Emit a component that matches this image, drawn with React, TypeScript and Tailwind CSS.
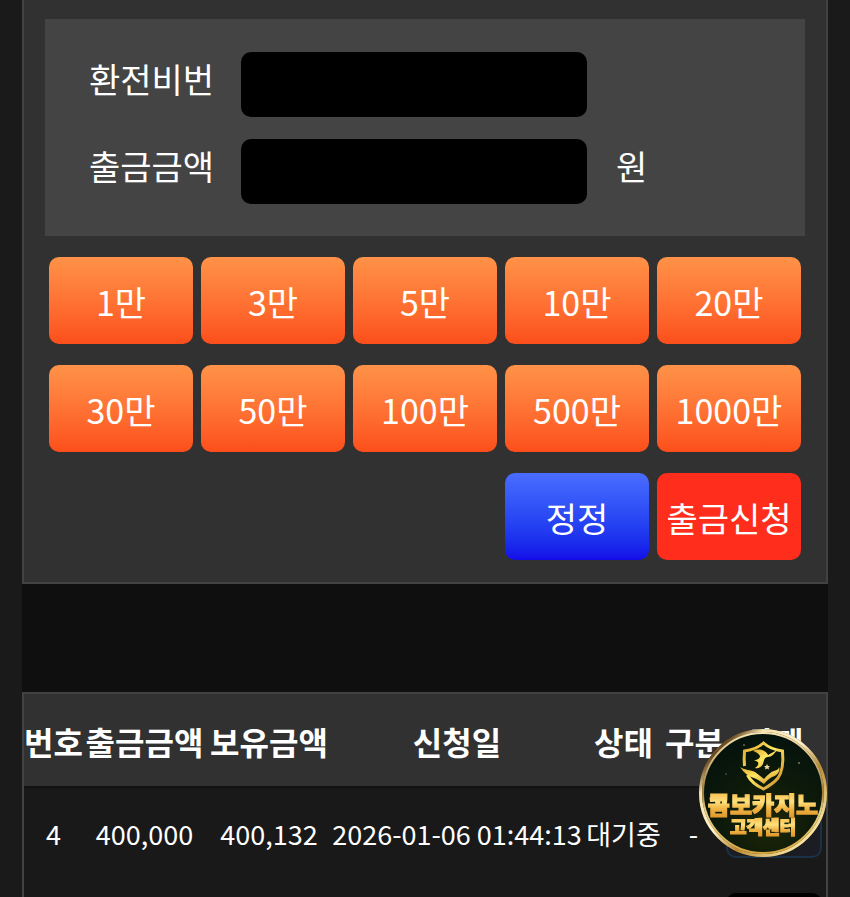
import React, { useState } from 'react';

const AMOUNTS = [
  { label: '1만', value: 10000 },
  { label: '3만', value: 30000 },
  { label: '5만', value: 50000 },
  { label: '10만', value: 100000 },
  { label: '20만', value: 200000 },
  { label: '30만', value: 300000 },
  { label: '50만', value: 500000 },
  { label: '100만', value: 1000000 },
  { label: '500만', value: 5000000 },
  { label: '1000만', value: 10000000 },
];

const COLUMNS = [
  { label: '번호', width: 'w-[59px]' },
  { label: '출금금액', width: 'w-[123px]' },
  { label: '보유금액', width: 'w-[126px]' },
  { label: '신청일', width: 'w-[250px]' },
  { label: '상태', width: 'w-[83px]' },
  { label: '구분', width: 'w-[57px]' },
  { label: '삭제', width: 'w-[104px]' },
];

const SupportBadge: React.FC = () => (
  <svg viewBox="0 0 130 130" className="w-[130px] h-[130px]" role="img" aria-label="고객센터">
    <defs>
      <linearGradient id="ring" x1="0" y1="0" x2="1" y2="1">
        <stop offset="0" stopColor="#e9d9a8" />
        <stop offset="0.15" stopColor="#6b4a22" />
        <stop offset="0.25" stopColor="#f3e3ae" />
        <stop offset="0.45" stopColor="#fff3cf" />
        <stop offset="0.62" stopColor="#b98a34" />
        <stop offset="0.85" stopColor="#f6e3a0" />
        <stop offset="1" stopColor="#c39335" />
      </linearGradient>
      <linearGradient id="ringInner" x1="0" y1="0" x2="0" y2="1">
        <stop offset="0" stopColor="#f6e6b4" />
        <stop offset="0.5" stopColor="#a07c38" />
        <stop offset="0.65" stopColor="#e8d48c" />
        <stop offset="1" stopColor="#d6a63e" />
      </linearGradient>
      <radialGradient id="face" cx="0.55" cy="0.75" r="0.75">
        <stop offset="0" stopColor="#1f2709" />
        <stop offset="0.5" stopColor="#0d1a0a" />
        <stop offset="1" stopColor="#04120d" />
      </radialGradient>
      <linearGradient id="gold" x1="0" y1="0" x2="1" y2="1">
        <stop offset="0" stopColor="#e0a72c" />
        <stop offset="0.45" stopColor="#ffe761" />
        <stop offset="1" stopColor="#c8862a" />
      </linearGradient>
      <linearGradient id="goldText" x1="0" y1="0" x2="0" y2="1">
        <stop offset="0" stopColor="#f3a92c" />
        <stop offset="0.45" stopColor="#ffe07c" />
        <stop offset="0.65" stopColor="#f0b442" />
        <stop offset="1" stopColor="#d98a24" />
      </linearGradient>
    </defs>
    <circle cx="65" cy="65" r="64" fill="#4a3414" />
    <circle cx="65" cy="65" r="62.500" fill="none" stroke="url(#ring)" strokeWidth="3" />
    <circle cx="65" cy="65" r="60" fill="url(#face)" stroke="url(#ringInner)" strokeWidth="2" />
    {/* shield */}
    <g fill="none" stroke="url(#gold)" strokeWidth="3">
      <path d="M46.500 38 C46 33 46 29 46.500 23 C54 22 61 19 65.500 15 C70 19 77 22 84.500 23 C85.500 34 85 43 80 50 C76 55 71 58 65.500 61 C59 58 53 54 49.500 47" />
    </g>
    <path d="M42 39 C46 42 53 42 57 44 C60 46 63 49 66 51 C69 47 73 44 76 43 C79 42 81 41 81 39 C83 44 78 48 74 49 C70 51 68 54 66 56 C62 53 59 51 56 50 C50 48 46 45 42 39 Z" fill="url(#gold)" />
    <path d="M55 23 C60 20 68 22 70 27 L79 22 C76 26 74 29 70 29 C66 29 66 33 65 36 C63 40 59 41 57 40 C60 38 61 36 60 34 L56 32 C60 32 62 30 62 28 C60 25 58 24 55 23 Z" fill="url(#gold)" />
    <path d="M69 36 l1 2 l2 0 l-1.500 1.500 l0.500 2 l-2 -1 l-2 1 l0.500 -2 l-1.500 -1.500 l2 0 Z" fill="#e8d9a0" />
    <g fill="#c9c79b">
      <circle cx="46" cy="17" r="0.700" />
      <circle cx="101" cy="35" r="0.800" />
      <circle cx="28" cy="46" r="0.600" />
    </g>
    <g fontFamily="'Noto Sans CJK KR', sans-serif" fontWeight="900" textAnchor="middle" fill="url(#goldText)" stroke="url(#goldText)" strokeWidth="1.200">
      <text x="65" y="86" fontSize="24">콤보카지노</text>
      <text x="65" y="106" fontSize="18">고객센터</text>
    </g>
  </svg>
);

const App: React.FC = () => {
  const [password, setPassword] = useState('');
  const [amount, setAmount] = useState(0);

  return (
    <div className="h-screen overflow-hidden bg-[#1a1a1a] px-[22px] font-['Noto_Sans_CJK_KR',sans-serif] text-white">
      <main className="min-h-full bg-[#0f0f0f]">
        <form onSubmit={(e) => e.preventDefault()} className="border-2 border-t-0 border-[#424242] bg-[#313131] px-[21px] pt-[19px] pb-[22px]">
          <div className="flex flex-col gap-[22px] bg-[#444444] pt-[33px] pb-8 pl-11 text-[34px] leading-10">
            <div className="flex items-center">
              <label htmlFor="password" className="w-[152px] pb-[11px]">환전비번</label>
              <input
                id="password"
                type="password"
                value={password}
                onChange={(e) => setPassword(e.target.value)}
                className="h-[65px] w-[346px] rounded-[10px] bg-black px-4"
              />
            </div>
            <div className="flex items-center">
              <label htmlFor="amount" className="w-[152px] pb-[11px]">출금금액</label>
              <input
                id="amount"
                type="text"
                value={amount ? amount.toLocaleString() : ''}
                onChange={(e) => setAmount(Number(e.target.value.replace(/\D/g, '')))}
                className="h-[65px] w-[346px] rounded-[10px] bg-black px-4 text-right"
              />
              <span className="ml-[29px] pb-[11px]">원</span>
            </div>
          </div>

          <div className="mx-1 mt-[21px] grid grid-cols-5 gap-x-2 gap-y-[21px] text-[34px]">
            {AMOUNTS.map((a) => (
              <button
                key={a.value}
                type="button"
                onClick={() => setAmount(amount + a.value)}
                className="h-[87px] rounded-[10px] bg-linear-to-b from-[#ff9248] to-[#fc4e1b] pt-0.5 whitespace-nowrap"
              >
                {a.label}
              </button>
            ))}
            <button
              type="button"
              onClick={() => setAmount(0)}
              className="col-start-4 h-[87px] rounded-[10px] bg-linear-to-b from-[#4a6cff] to-[#1509e8] pt-0.5 whitespace-nowrap"
            >
              정정
            </button>
            <button type="submit" className="h-[87px] rounded-[10px] bg-[#ff2d1c] pt-0.5 whitespace-nowrap">
              출금신청
            </button>
          </div>
        </form>

        <section className="mt-[108px] border-2 border-b-0 border-[#424242] bg-[#191919]">
          <table className="w-full table-fixed text-center whitespace-nowrap">
            <thead>
              <tr className="h-[93px] border-b-2 border-[#121212] bg-[#313131] text-[32px]">
                {COLUMNS.map((c) => (
                  <th key={c.label} className={`${c.width} p-0 pt-0.5 font-bold`}>{c.label}</th>
                ))}
              </tr>
            </thead>
            <tbody className="text-[27px]">
              <tr className="h-[94px]">
                <td>4</td>
                <td>400,000</td>
                <td>400,132</td>
                <td>2026-01-06 01:44:13</td>
                <td>대기중</td>
                <td>-</td>
                <td className="px-1 pt-3 align-top">
                  <button type="button" aria-label="4번 삭제" className="block h-[58px] w-full rounded-[10px] border-2 border-[#1b3147] bg-[#1b1d22]" />
                </td>
              </tr>
              <tr className="h-[94px]">
                <td colSpan={6} />
                <td className="px-1 pt-3 align-top">
                  <button type="button" aria-label="삭제" className="block h-[58px] w-full rounded-[10px] bg-black" />
                </td>
              </tr>
            </tbody>
          </table>
        </section>
      </main>

      <a href="#support" className="fixed right-[22px] bottom-[39px]">
        <SupportBadge />
      </a>
    </div>
  );
};

export default App;
